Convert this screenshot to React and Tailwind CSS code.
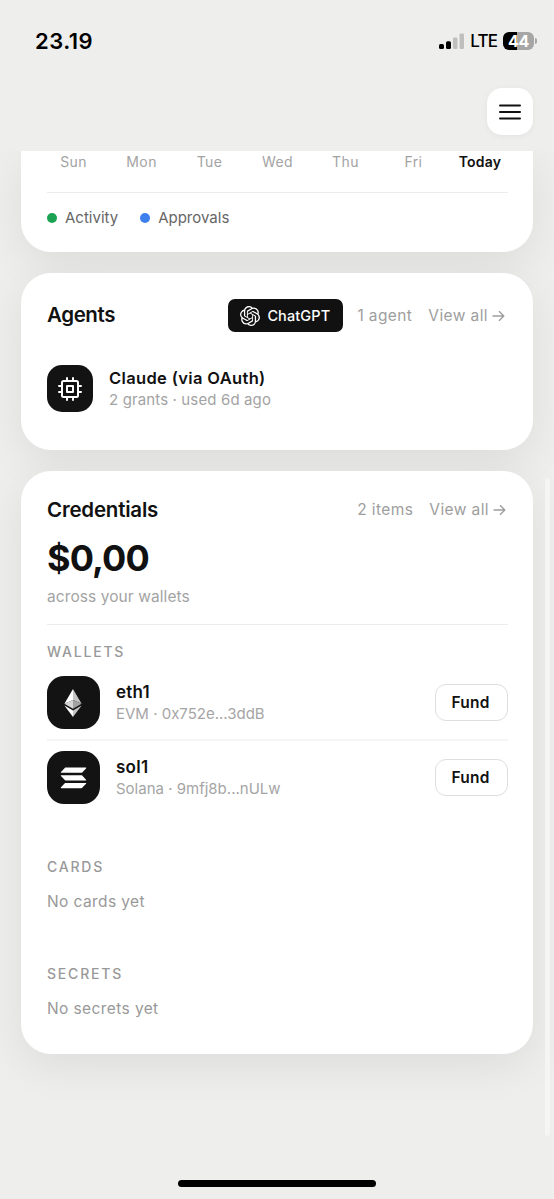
import React from "react";
import { SiOpenai } from "react-icons/si";

const days = ["Sun", "Mon", "Tue", "Wed", "Thu", "Fri", "Today"];

function Arrow() {
  return (
    <svg width="13" height="12" viewBox="0 0 13 12" fill="none" stroke="currentColor" strokeWidth="1.35" strokeLinecap="round" strokeLinejoin="round">
      <path d="M1 6h10.800M7.300 1.600 11.800 6 7.300 10.400" />
    </svg>
  );
}

function ChipIcon() {
  return (
    <svg width="24" height="24" viewBox="0 0 24 24" fill="none" stroke="white" strokeWidth="2" strokeLinecap="round" strokeLinejoin="round">
      <rect x="4" y="4" width="16" height="16" rx="1.5" />
      <rect x="9" y="9" width="6" height="6" />
      <path d="M9 1v3M15 1v3M9 20v3M15 20v3M20 9h3M20 15h3M1 9h3M1 15h3" />
    </svg>
  );
}

function EthIcon() {
  return (
    <svg className="mr-[1px]" width="18" height="28" viewBox="0 0 18 28">
      <path d="M9 0v10.9l8.6 3.9z" fill="#c4c4c4" />
      <path d="M9 0 .4 14.8 9 10.9z" fill="#fff" />
      <path d="M9 10.9v8.9l8.6-5z" fill="#a2a2a2" />
      <path d="M9 10.9.4 14.8l8.6 5z" fill="#d5d5d5" />
      <path d="M9 21.5V28l8.6-11.6z" fill="#c4c4c4" />
      <path d="M9 28v-6.500L.4 16.400z" fill="#fff" />
    </svg>
  );
}

function SolIcon() {
  return (
    <svg width="27" height="22" viewBox="0 0 28 23" fill="#fff">
      <path d="M5.800.6H26.700c.6 0 .8.5.4.9l-4 4.200c-.3.300-.5.400-.9.400H1.300c-.6 0-.8-.5-.4-.9l4-4.200c.3-.3.500-.4.900-.4z" />
      <path d="M1.300 8.600H22.200c.4 0 .6.100.9.400l4 4.200c.4.400.2.900-.4.900H5.800c-.4 0-.6-.1-.9-.4l-4-4.200c-.4-.4-.2-.9.400-.9z" />
      <path d="M5.800 16.700H26.700c.6 0 .8.500.4.900l-4 4.200c-.3.300-.5.400-.9.400H1.300c-.6 0-.8-.5-.4-.9l4-4.200c.3-.3.500-.4.900-.4z" />
    </svg>
  );
}

function Card({ className, children }) {
  return (
    <section className={"bg-white pl-[26px] pr-[25px] shadow-[0_12px_44px_rgba(0,0,0,0.075)] " + className}>
      {children}
    </section>
  );
}

function ViewAll({ count }) {
  return (
    <div className="flex items-center text-[15.500px] leading-5 text-[#9e9e9e]">
      <span className="tracking-[0.4px]">{count}</span>
      <span className="ml-[16px] tracking-[0.4px]">View all</span>
      <span className="ml-[4px] mr-[2px]"><Arrow /></span>
    </div>
  );
}

function Wallet({ icon, name, detail }) {
  return (
    <div className="flex items-center">
      <div className="flex size-[53px] shrink-0 items-center justify-center rounded-[17px] bg-[#131313]">{icon}</div>
      <div className="ml-4 flex-1">
        <div className="text-[17px] font-semibold leading-[22px] tracking-[0.250px]">{name}</div>
        <div className="text-[15px] leading-[22px] tracking-[0px] text-[#a5a5a5]">{detail}</div>
      </div>
      <button className="h-[37px] w-[73px] rounded-[11px] border border-[#dedede] pr-[2px] text-[15.500px] font-semibold leading-none tracking-[0.2px]">Fund</button>
    </div>
  );
}

export default function App() {
  return (
    <div className="relative flex h-[1199px] w-[554px] flex-col overflow-hidden bg-[#eeeeed] font-['Inter',sans-serif] text-[#111]">
      <header className="relative z-10 h-[151px] shrink-0 bg-[#eeeeed]">
        <div className="flex h-[82px] items-center justify-between pl-[35px] pr-[17px] text-black">
          <span className="text-[22px] font-semibold tracking-[0.450px]">23.19</span>
          <div className="flex items-center">
            <svg width="26" height="17" viewBox="0 0 26 17">
              <rect x="0" y="11" width="5" height="5" rx="1.500" fill="#000" />
              <rect x="7" y="8.300" width="5" height="7.700" rx="1.500" fill="#000" />
              <rect x="14" y="4.500" width="4.500" height="11.500" rx="1.300" fill="#bfbfbe" />
              <rect x="20.500" y=".5" width="4.500" height="15.500" rx="1.300" fill="#bfbfbe" />
            </svg>
            <span className="ml-[5px] pt-px text-[17px] font-medium tracking-[-0.900px]">LTE</span>
            <div className="ml-[6px] flex h-[18px] w-[31px] items-center justify-center rounded-[6px] bg-[linear-gradient(90deg,#000_44%,#a6a6a6_44%)] text-[16px] font-bold leading-none tracking-[-0.200px] text-white">44</div>
            <div className="ml-[1px] h-[6px] w-[2px] rounded-r-full bg-[#a6a6a6]" />
          </div>
        </div>
        <div className="flex justify-end pr-[21px] pt-[6px]">
          <button className="flex h-[47px] w-[46px] items-center justify-center rounded-[15px] bg-white shadow-[0_1px_6px_rgba(0,0,0,0.05)]">
            <svg width="24" height="20" viewBox="0 0 24 20" stroke="#111" strokeWidth="2" strokeLinecap="round">
              <path d="M2 3.500h20M2 10h20M2 16.500h20" />
            </svg>
          </button>
        </div>
      </header>

      <main className="flex flex-col gap-[21px] px-[21px]">
        <Card className="h-[101px] rounded-b-[30px]">
          <div className="grid grid-cols-7 gap-x-[14.800px] border-b border-[#ececec] pt-[1px] pb-[20px] text-center text-[14px] leading-[20px] tracking-[0.4px] text-[#a3a3a3]">
            {days.map((d) => (
              <span key={d} className={d === "Today" ? "-ml-[3px] font-semibold tracking-[0.2px] text-[#111]" : ""}>{d}</span>
            ))}
          </div>
          <div className="flex h-[48px] items-center pt-[2px] text-[15px] tracking-[0px] text-[#666]">
            <span className="size-[10px] rounded-full bg-[#1ba353]" />
            <span className="ml-[8px]">Activity</span>
            <span className="ml-[22px] size-[10px] rounded-full bg-[#3e80ee]" />
            <span className="ml-[8px]">Approvals</span>
          </div>
        </Card>

        <Card className="h-[177px] rounded-[30px] pt-[26px]">
          <div className="flex h-[33px] items-center">
            <h2 className="flex-1 text-[20.500px] font-semibold tracking-[-0.400px]">Agents</h2>
            <div className="mr-[15px] flex h-[33px] w-[115px] items-center rounded-[7px] bg-[#111] pl-[12px] text-[14.500px] font-medium tracking-[0.1px] text-white">
              <SiOpenai size={20} />
              <span className="ml-[7px]">ChatGPT</span>
            </div>
            <div className="-ml-px"><ViewAll count="1 agent" /></div>
            <div className="w-px" />
          </div>
          <div className="mt-[33px] flex items-center">
            <div className="flex h-[47px] w-[46px] items-center justify-center rounded-[15px] bg-[#131313]"><ChipIcon /></div>
            <div className="ml-[16px] pt-px">
              <div className="text-[16.500px] font-semibold leading-[22px] tracking-[0.350px]">Claude (via OAuth)</div>
              <div className="text-[15px] leading-[22px] tracking-[0.130px] text-[#a3a3a3]">2 grants · used 6d ago</div>
            </div>
          </div>
        </Card>

        <Card className="h-[583px] rounded-[30px] pt-[28px]">
          <div className="flex h-[22px] items-center">
            <h2 className="flex-1 text-[20.500px] font-semibold tracking-[-0.200px]">Credentials</h2>
            <ViewAll count="2 items" />
          </div>
          <div className="mt-[17px] text-[36px] font-bold leading-[40px] tracking-[-0.900px]">$0,00</div>
          <div className="mt-[9px] border-b border-[#ececec] pb-[17px] text-[15.500px] leading-[20px] tracking-[0.080px] text-[#a3a3a3]">across your wallets</div>
          <h3 className="mt-[17px] text-[14px] font-medium leading-[20px] tracking-[1.800px] text-[#999]">WALLETS</h3>
          <div className="mt-[14px] border-b-2 border-[#f5f5f5] pb-[10px]">
            <Wallet icon={<EthIcon />} name="eth1" detail="EVM · 0x752e...3ddB" />
          </div>
          <div className="mt-[10px]">
            <Wallet icon={<SolIcon />} name="sol1" detail="Solana · 9mfj8b...nULw" />
          </div>
          <h3 className="mt-[53px] text-[14px] font-medium leading-[20px] tracking-[1.800px] text-[#999]">CARDS</h3>
          <p className="mt-[15px] text-[15.500px] leading-[20px] tracking-[0.400px] text-[#999]">No cards yet</p>
          <h3 className="mt-[52px] text-[14px] font-medium leading-[20px] tracking-[1.800px] text-[#999]">SECRETS</h3>
          <p className="mt-[15px] text-[15.500px] leading-[20px] tracking-[0.400px] text-[#999]">No secrets yet</p>
        </Card>
      </main>

      <div className="absolute right-[4px] top-[478px] h-[658px] w-[5px] rounded-full bg-[#f5f5f4]" />
      <div className="absolute bottom-[12px] left-[178px] h-[7px] w-[198px] rounded-full bg-black" />
    </div>
  );
}
